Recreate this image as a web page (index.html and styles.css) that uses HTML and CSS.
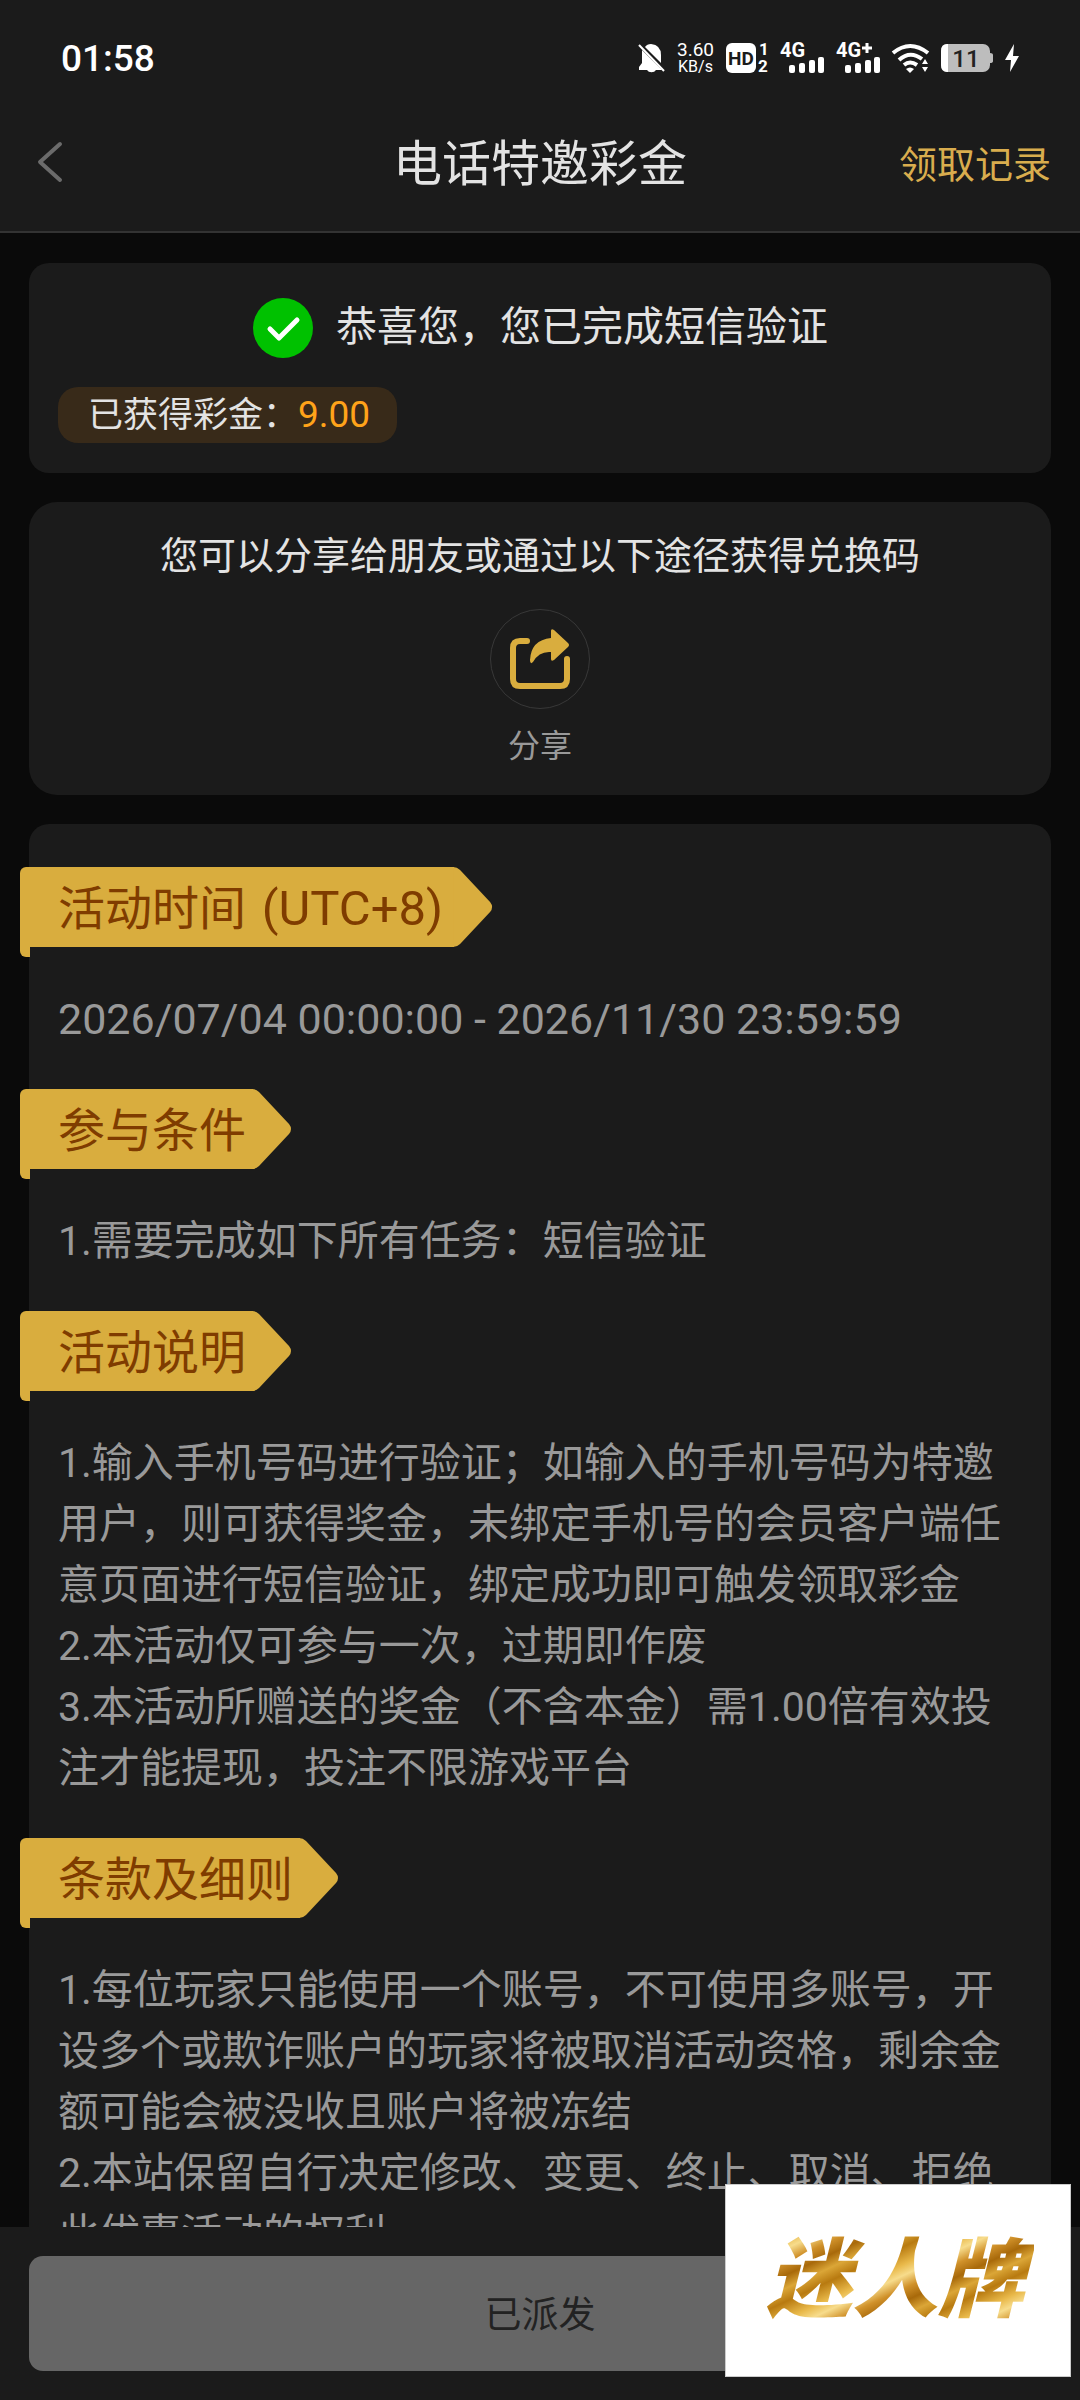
FILE: index.html
```
<!DOCTYPE html>
<html lang="zh-CN">
<head>
    <meta charset="UTF-8">
    <meta name="viewport" content="width=device-width, initial-scale=1.0">
    <title>电话特邀彩金</title>
    <link rel="stylesheet" href="styles.css">
</head>
<body>
<header>
    <div class="status-bar">
        <span class="clock">01:58</span>
        <div class="status-icons">
            <svg width="27" height="30" viewBox="0 0 27 30" fill="#fff">
                <path d="M4 7 L20 23 L24 27 H18 A5 4 0 0 1 9 27 H1 V24 L4 20 Z"/>
                <path d="M7 4 Q9 1 13 1 Q23 2 23 12 V20 Z"/>
                <path d="M1 2 L26 28" stroke="#fff" stroke-width="2"/>
            </svg>
            <span class="speed"><span>3.60</span><span>KB/s</span></span>
            <svg width="42" height="30" viewBox="0 0 42 30" fill="#fff">
                <rect width="30" height="30" rx="6"/>
                <text class="hd-text" x="15" y="22" text-anchor="middle">HD</text>
                <text class="sim-text" x="33" y="12">1</text>
                <text class="sim-text" x="32" y="29">2</text>
            </svg>
            <svg width="44" height="30" viewBox="0 0 44 30" fill="#fff">
                <text class="net-text" x="0" y="14">4G</text>
                <rect x="9" y="22" width="6" height="8" rx="2"/>
                <rect x="19" y="20" width="6" height="10" rx="2"/>
                <rect x="29" y="17" width="6" height="13" rx="2"/>
                <rect x="38" y="14" width="6" height="16" rx="2"/>
            </svg>
            <svg width="44" height="30" viewBox="0 0 44 30" fill="#fff">
                <text class="net-text" x="0" y="14">4G</text>
                <path d="M26 5 H36 M31 0 V10" stroke="#fff" stroke-width="3"/>
                <rect x="9" y="22" width="6" height="8" rx="2"/>
                <rect x="19" y="20" width="6" height="10" rx="2"/>
                <rect x="29" y="17" width="6" height="13" rx="2"/>
                <rect x="38" y="14" width="6" height="16" rx="2"/>
            </svg>
            <svg width="37" height="30" viewBox="0 0 37 30" fill="none" stroke="#fff" stroke-width="4">
                <path d="M1 10 Q18 -4 36 10"/>
                <path d="M7 17 Q18 7 30 16"/>
                <path d="M12 22 Q18 17 25 22"/>
                <path d="M14 26 Q18 23 22 26 L18 30 Z" fill="#fff" stroke="none"/>
                <path d="M30 21 L33 16 L36 21 Z M30 24 L33 29 L36 24 Z" fill="#fff" stroke="none"/>
            </svg>
            <svg width="52" height="28" viewBox="0 0 52 28">
                <rect width="49" height="28" rx="7" fill="#bdbdbd"/>
                <path d="M49 9 Q52 9 52 11 V17 Q52 19 49 19 Z" fill="#bdbdbd"/>
                <path d="M7 0 H6 Q0 0 0 7 V21 Q0 28 6 28 H7 Z" fill="#fff"/>
                <text class="battery-text" x="25" y="23" text-anchor="middle">11</text>
            </svg>
            <svg width="14" height="28" viewBox="0 0 14 28" fill="#fff">
                <path d="M9 0 L0 16 H6 L5 28 L14 12 H8 Z"/>
            </svg>
        </div>
    </div>
    <nav>
        <button class="back" aria-label="返回">
            <svg width="26" height="42" viewBox="0 0 26 42" fill="none" stroke="#6b6b6b" stroke-width="4" stroke-linecap="round" stroke-linejoin="round">
                <path d="M23 3 L3 21 L23 39"/>
            </svg>
        </button>
        <h1>电话特邀彩金</h1>
        <a class="record" href="#">领取记录</a>
    </nav>
</header>

<main>
    <section class="card success">
        <div class="success-title">
            <svg width="62" height="62" viewBox="0 0 62 62">
                <circle cx="31" cy="31" r="30" fill="#00c100"/>
                <path d="M18 32 L27 41 L45 23" fill="none" stroke="#fff" stroke-width="5" stroke-linecap="round" stroke-linejoin="round"/>
            </svg>
            <span>恭喜您，您已完成短信验证</span>
        </div>
        <div class="bonus">已获得彩金：<span class="amount">9.00</span></div>
    </section>

    <section class="card share">
        <p>您可以分享给朋友或通过以下途径获得兑换码</p>
        <button class="share-button">
            <span class="share-circle">
                <svg width="60" height="60" viewBox="0 0 60 60">
                    <path d="M17 12 H10 Q3 12 3 19 V50 Q3 57 10 57 H50 Q57 57 57 50 V30" fill="none" stroke="#d9ad3e" stroke-width="6" stroke-linecap="round"/>
                    <path d="M41 2 Q41 -1 44 1 L58 14 Q60 16 58 18 L44 31 Q41 33 41 30 V23 Q29 22 23 33 Q20 36 20 31 Q21 11 41 9 Z" fill="#d9ad3e"/>
                </svg>
            </span>
            <span class="share-label">分享</span>
        </button>
    </section>

    <section class="card rules">
        <h2>活动时间 <span class="timezone">(UTC+8)</span></h2>
        <div class="rule-text date">2026/07/04 00:00:00 - 2026/11/30 23:59:59</div>
        <h2>参与条件</h2>
        <div class="rule-text">
            <p>1.需要完成如下所有任务：短信验证</p>
        </div>
        <h2>活动说明</h2>
        <div class="rule-text">
            <p>1.输入手机号码进行验证；如输入的手机号码为特邀用户，则可获得奖金，未绑定手机号的会员客户端任意页面进行短信验证，绑定成功即可触发领取彩金</p>
            <p>2.本活动仅可参与一次，过期即作废</p>
            <p>3.本活动所赠送的奖金（不含本金）需1.00倍有效投注才能提现，投注不限游戏平台</p>
        </div>
        <h2>条款及细则</h2>
        <div class="rule-text">
            <p>1.每位玩家只能使用一个账号，不可使用多账号，开设多个或欺诈账户的玩家将被取消活动资格，剩余金额可能会被没收且账户将被冻结</p>
            <p>2.本站保留自行决定修改、变更、终止、取消、拒绝此优惠活动的权利</p>
        </div>
    </section>
</main>

<footer>
    <button class="claim" disabled>已派发</button>
</footer>

<div class="brand"><span>迷人牌</span></div>
</body>
</html>
```
FILE: styles.css
```
* {
    box-sizing: border-box;
}

body {
    font-family: Roboto, "Noto Sans CJK SC", sans-serif;
    margin: 0;
    height: 100vh;
    display: flex;
    flex-direction: column;
    background-color: #0a0a0a;
    color: #e3e3e3;
}

h1, h2, p {
    margin: 0;
    font-weight: 400;
}

button {
    font-family: inherit;
    padding: 0;
    border: none;
    background: none;
    cursor: pointer;
}

svg {
    display: block;
    overflow: visible;
}

header {
    background-color: #1b1b1b;
    border-bottom: 2px solid #333;
}

.status-bar {
    display: flex;
    justify-content: space-between;
    align-items: center;
    height: 92px;
    padding: 24px 61px 0;
    color: #fff;
}

.clock {
    font-size: 37px;
    font-weight: 500;
}

.status-icons {
    display: flex;
    align-items: center;
    gap: 12px;
}

.speed {
    display: flex;
    flex-direction: column;
    align-items: center;
    width: 37px;
    font-size: 19px;
    line-height: 17px;
}

.speed span:last-child {
    font-size: 16px;
}

.hd-text {
    fill: #1b1b1b;
    font-size: 19px;
    font-weight: 700;
}

.sim-text {
    font-size: 17px;
    font-weight: 700;
}

.net-text {
    font-size: 20px;
    font-weight: 700;
}

.battery-text {
    fill: #222;
    font-size: 24px;
    font-weight: 500;
}

nav {
    display: grid;
    grid-template-columns: 1fr auto 1fr;
    align-items: center;
    height: 139px;
    padding: 0 29px;
}

.back {
    justify-self: start;
    padding-left: 8px;
}

nav h1 {
    padding-bottom: 5px;
    font-size: 49px;
}

.record {
    justify-self: end;
    font-size: 38px;
    color: #d9ad4e;
    text-decoration: none;
}

main {
    flex: 1;
    min-height: 0;
    overflow: hidden;
    display: flex;
    flex-direction: column;
    gap: 29px;
    padding: 30px 29px 0;
}

.card {
    flex-shrink: 0;
    background-color: #1b1b1b;
    border-radius: 20px;
    padding: 0 29px;
}

.success {
    padding-top: 34px;
    padding-bottom: 30px;
}

.success-title {
    display: flex;
    justify-content: center;
    align-items: center;
    gap: 22px;
    height: 61px;
    font-size: 41px;
    line-height: 61px;
}

.bonus {
    width: fit-content;
    height: 56px;
    margin-top: 29px;
    padding: 0 27px 0 30px;
    border-radius: 20px;
    background-color: #382a19;
    font-size: 35px;
    line-height: 56px;
}

.amount {
    color: #ffa31a;
    font-size: 37px;
}

.share {
    display: flex;
    flex-direction: column;
    align-items: center;
    gap: 22px;
    padding-top: 24px;
    padding-bottom: 26px;
    border-radius: 28px;
}

.share p {
    font-size: 38px;
    line-height: 61px;
}

.share-button {
    display: flex;
    flex-direction: column;
    align-items: center;
    gap: 15px;
}

.share-circle {
    display: flex;
    justify-content: center;
    align-items: center;
    width: 100px;
    height: 100px;
    border: 1px solid #383838;
    border-radius: 50%;
}

.share-label {
    font-size: 32px;
    line-height: 45px;
    color: #999;
}

.rules {
    padding-top: 43px;
    color: #999;
}

/* gold ribbon, hangs over the left edge of the card */
.rules h2 {
    position: relative;
    width: fit-content;
    height: 80px;
    margin-left: -38px;
    padding: 0 7px 0 38px;
    border-top-left-radius: 6px;
    background-color: #d9ad3e;
    color: #7f3c00;
    font-size: 47px;
    line-height: 83px;
}

.rules h2::before {
    content: "";
    position: absolute;
    top: 100%;
    left: 0;
    width: 10px;
    height: 10px;
    border-bottom-left-radius: 6px;
    background-color: #d9ad3e;
}

/* overlaps the ribbon by 1px so no seam shows */
.rules h2::after {
    content: "";
    position: absolute;
    top: 0;
    left: calc(100% - 1px);
    width: 40px;
    height: 80px;
    background-color: #d9ad3e;
    clip-path: path("M0 0 Q4 0 7 3 L37 35 Q41 40 37 45 L7 77 Q4 80 0 80 Z");
}

.timezone {
    padding: 0 4px;
    font-size: 49px;
}

.rule-text {
    padding: 42px 0 39px;
    font-size: 41px;
    line-height: 61px;
}

.date {
    font-size: 43px;
}

footer {
    background-color: #1b1b1b;
    padding: 29px;
}

.claim {
    display: block;
    width: 100%;
    height: 115px;
    padding-bottom: 4px;
    border-radius: 14px;
    background-color: #666;
    color: #222;
    font-size: 37px;
}

.brand {
    position: fixed;
    right: 9px;
    bottom: 23px;
    display: flex;
    justify-content: center;
    align-items: center;
    width: 346px;
    height: 193px;
    border: 1px solid #ccc;
    background-color: #fff;
}

.brand span {
    padding: 0 10px 0 4px;
    font-size: 86px;
    font-weight: 900;
    font-style: italic;
    line-height: 100px;
    color: transparent;
    background: repeating-linear-gradient(155deg, #b87a10 0, #e9b94a 16px, #f7dc8c 26px, #d0912a 38px, #a8690a 50px, #dba637 62px, #b87a10 74px);
    background-clip: text;
    -webkit-background-clip: text;
}
```
